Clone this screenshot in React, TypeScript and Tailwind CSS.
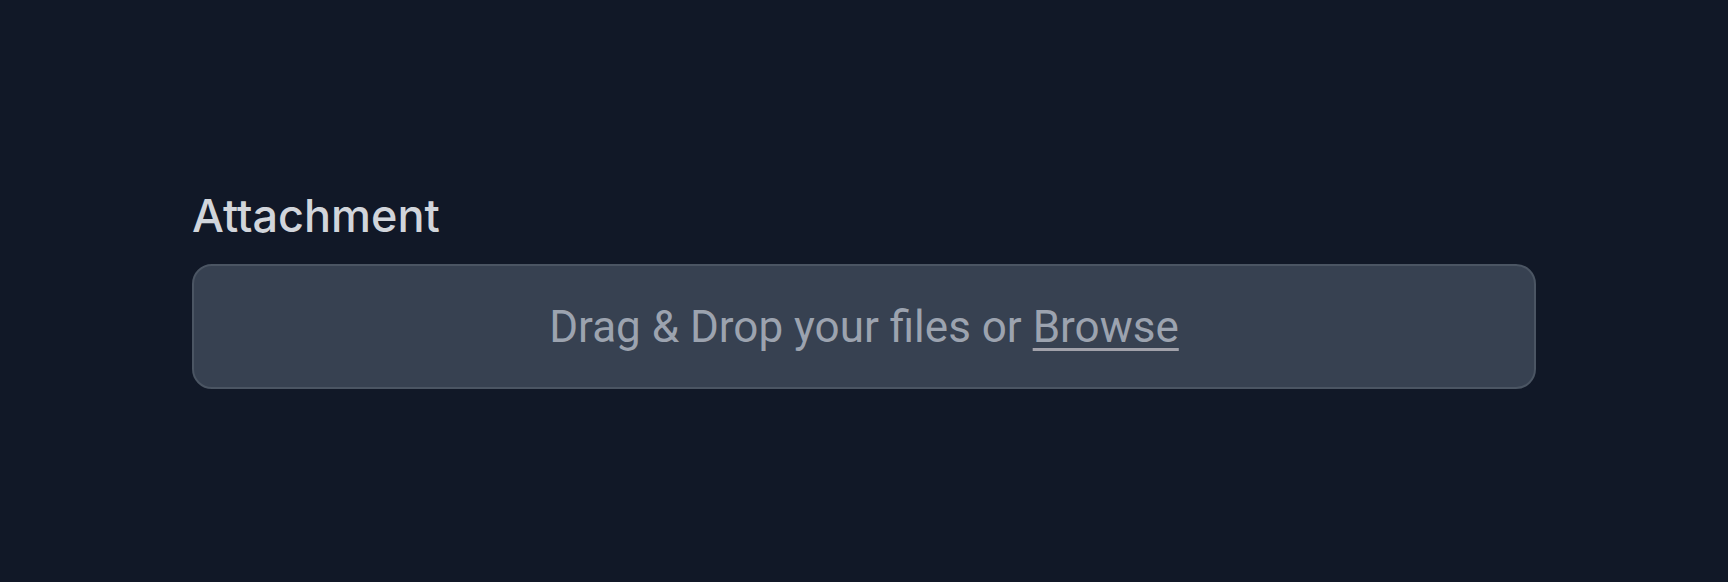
import React from 'react';

export default function App() {
  return (
    <main className="min-h-screen w-full bg-[#111827] px-[192px] pt-[188px]" style={{ fontFamily: 'Inter, "Noto Sans", sans-serif' }}>
      <label className="block text-[45px] leading-[56px] font-medium text-[#d1d5db]">Attachment</label>
      <div className="mt-[20px] flex h-[125px] w-full items-center justify-center rounded-[20px] border-2 border-[#4b5563] bg-[#374151]">
        <p className="text-[44px] text-[#9ca3af]" style={{ fontFamily: 'Roboto, "Liberation Sans", sans-serif' }}>
          Drag &amp; Drop your files or{' '}
          <span className="cursor-pointer underline decoration-[#a1a1aa] decoration-[3px] underline-offset-[6px]">Browse</span>
        </p>
      </div>
    </main>
  );
}
